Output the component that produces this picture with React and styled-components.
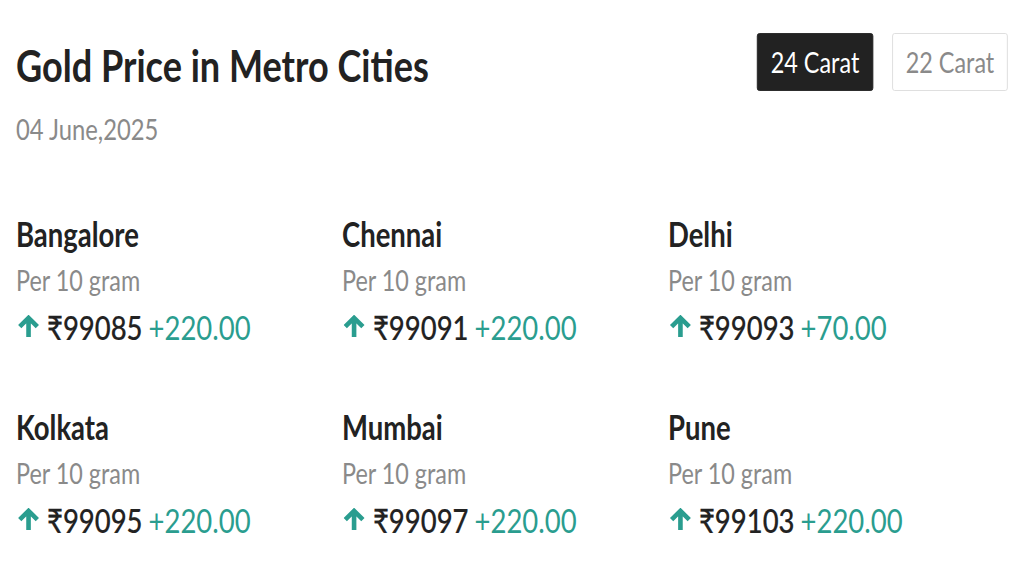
import React, { useState } from "react";
import styled, { createGlobalStyle } from "styled-components";

// the reference is squeezed horizontally, so the page is laid out wide and scaled on x
const SX = 0.82;
const px = (v) => `${(v / SX).toFixed(2)}px`;

const cities = [
  { name: "Bangalore", price: 99085, change: 220 },
  { name: "Chennai", price: 99091, change: 220 },
  { name: "Delhi", price: 99093, change: 70 },
  { name: "Kolkata", price: 99095, change: 220 },
  { name: "Mumbai", price: 99097, change: 220 },
  { name: "Pune", price: 99103, change: 220 },
];

function UpArrow() {
  return (
    <ArrowIcon
      width={px(21)}
      height="22"
      viewBox="0 0 20 21"
      preserveAspectRatio="none"
      fill="none"
    >
      <path
        d="M10 21V3.2M1.6 11.2L10 2.8l8.4 8.4"
        stroke="#2a9d8f"
        strokeWidth="4.4"
      />
    </ArrowIcon>
  );
}

function App() {
  const [carat, setCarat] = useState("24");

  return (
    <>
      <GlobalStyle />
      <Page>
        <Header>
          <div>
            <Title>Gold Price in Metro Cities</Title>
            <DateLine>04 June,2025</DateLine>
          </div>
          <Toggle>
            <CaratButton $active={carat === "24"} onClick={() => setCarat("24")}>
              24 Carat
            </CaratButton>
            <CaratButton $active={carat === "22"} onClick={() => setCarat("22")}>
              22 Carat
            </CaratButton>
          </Toggle>
        </Header>
        <Grid>
          {cities.map((city) => (
            <City key={city.name}>
              <CityName>{city.name}</CityName>
              <Unit>Per 10 gram</Unit>
              <PriceRow>
                <UpArrow />
                <Price>₹{city.price}</Price>
                <Change>+{city.change.toFixed(2)}</Change>
              </PriceRow>
            </City>
          ))}
        </Grid>
      </Page>
    </>
  );
}

export default App;

const GlobalStyle = createGlobalStyle`
  html, body {
    margin: 0;
    background: #ffffff;
    overflow: hidden;
  }
  body {
    font-family: Lato, "Liberation Sans", sans-serif;
    color: #222222;
  }
`;

const Page = styled.div`
  width: ${px(1024)};
  height: 576px;
  box-sizing: border-box;
  padding: 33px ${px(16)} 0 ${px(16)};
  transform: scaleX(${SX});
  transform-origin: 0 0;
`;

const Header = styled.div`
  display: flex;
  justify-content: space-between;
  align-items: flex-start;
`;

const Title = styled.h1`
  margin: 0;
  font-size: 44px;
  font-weight: 700;
  line-height: 64px;
  color: #222222;
`;

const DateLine = styled.div`
  margin-top: 12px;
  font-size: 29px;
  line-height: 40px;
  color: #8a8a8a;
`;

const Toggle = styled.div`
  display: flex;
  gap: ${px(19)};
`;

const CaratButton = styled.button`
  width: ${px(116)};
  height: 58px;
  border-radius: 3px;
  border: 1px solid ${(p) => (p.$active ? "#222222" : "#dcdcdc")};
  background: ${(p) => (p.$active ? "#222222" : "#ffffff")};
  color: ${(p) => (p.$active ? "#ffffff" : "#8a8a8a")};
  font-family: Lato, "Liberation Sans", sans-serif;
  font-size: 28.5px;
  padding: 0;
  cursor: pointer;
`;

const Grid = styled.div`
  display: grid;
  grid-template-columns: repeat(3, ${px(326)});
  row-gap: 57px;
  margin-top: 64px;
`;

const City = styled.div`
  display: flex;
  flex-direction: column;
`;

const CityName = styled.div`
  font-size: 33.5px;
  font-weight: 700;
  line-height: 42px;
  color: #222222;
`;

const Unit = styled.div`
  margin-top: 5px;
  font-size: 28.5px;
  line-height: 40px;
  color: #8a8a8a;
`;

const PriceRow = styled.div`
  display: flex;
  align-items: center;
  margin-top: 5px;
  font-size: 33.5px;
  line-height: 44px;
`;

const ArrowIcon = styled.svg`
  display: block;
  flex: 0 0 auto;
  margin-left: ${px(2)};
  margin-right: ${px(8)};
  margin-top: -2px;
`;

const Price = styled.span`
  font-weight: 500;
  color: #222222;
  -webkit-text-stroke: 0.2px #222222;
  margin-right: ${px(6)};
`;

const Change = styled.span`
  color: #2a9d8f;
`;
